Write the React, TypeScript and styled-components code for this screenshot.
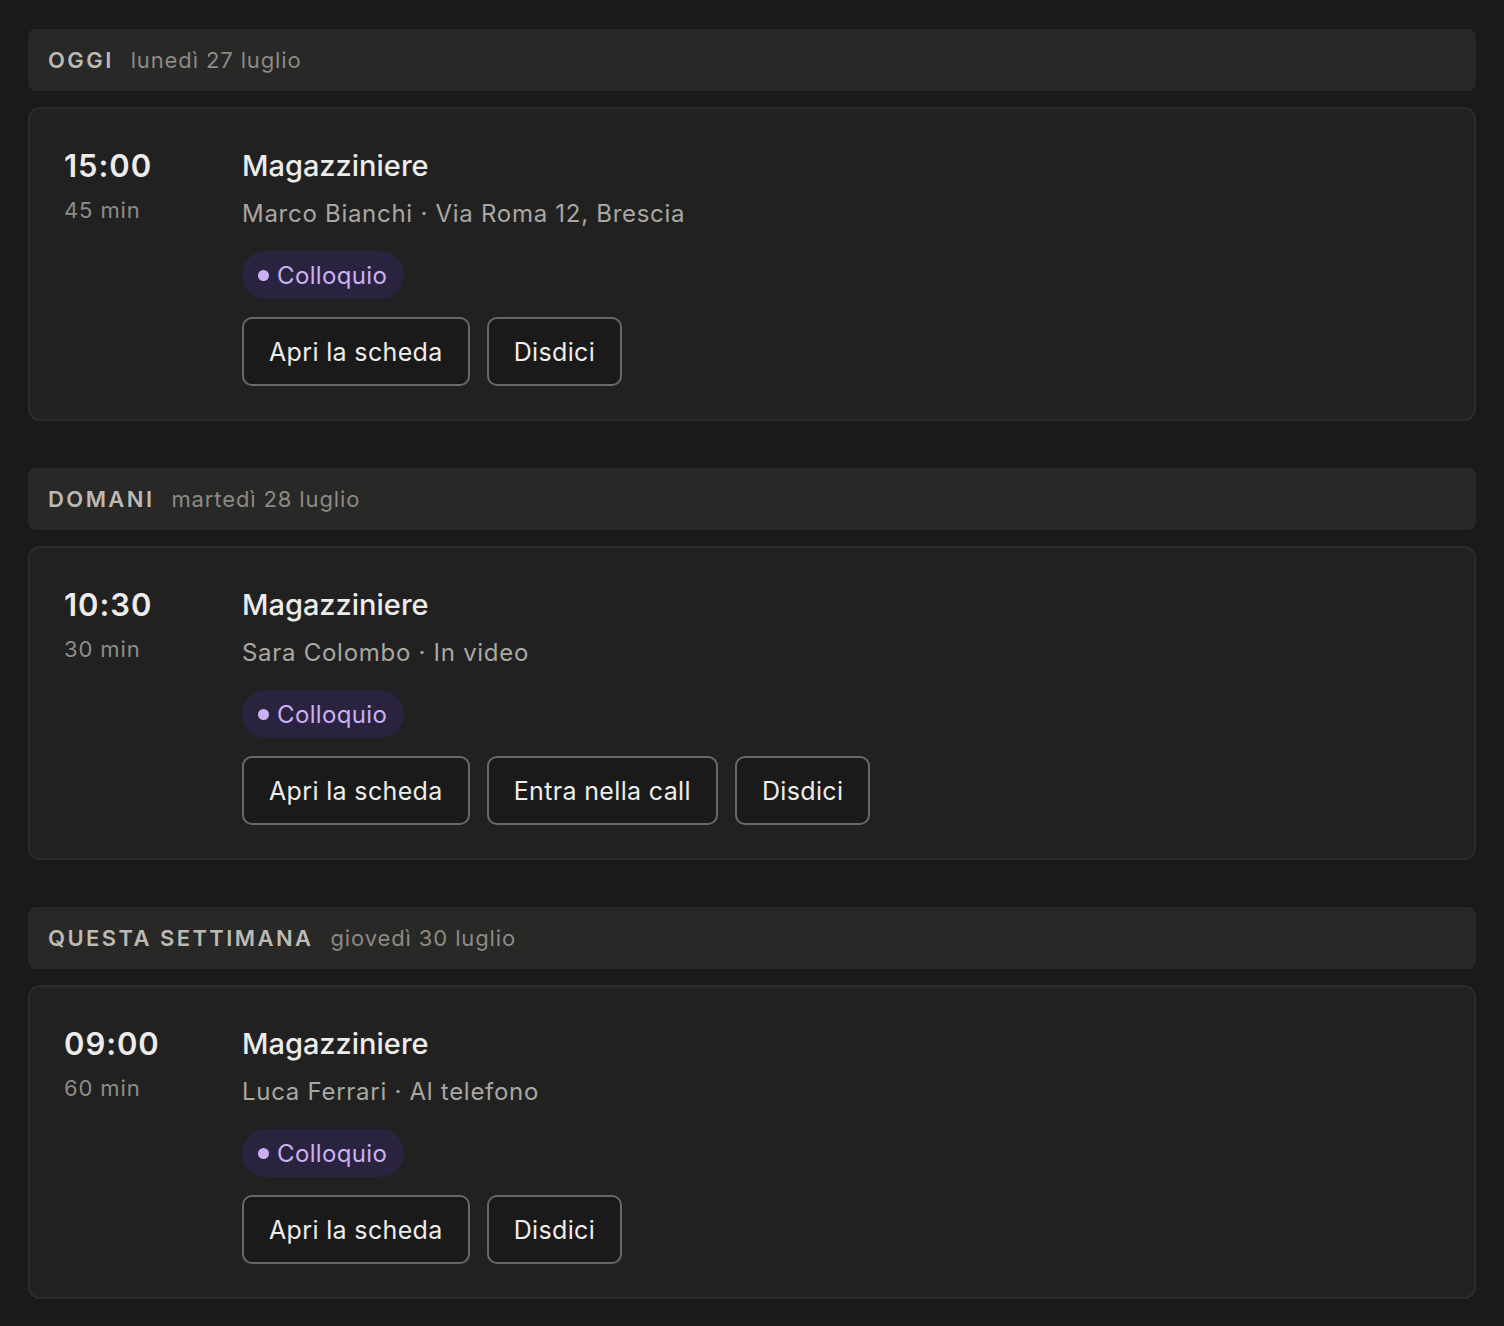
import React from "react";
import styled, { createGlobalStyle } from "styled-components";

type Appointment = {
  time: string;
  duration: string;
  role: string;
  candidate: string;
  place: string;
  kind: string;
  actions: string[];
};

type Day = {
  label: string;
  date: string;
  items: Appointment[];
};

const days: Day[] = [
  {
    label: "Oggi",
    date: "lunedì 27 luglio",
    items: [
      {
        time: "15:00",
        duration: "45 min",
        role: "Magazziniere",
        candidate: "Marco Bianchi",
        place: "Via Roma 12, Brescia",
        kind: "Colloquio",
        actions: ["Apri la scheda", "Disdici"],
      },
    ],
  },
  {
    label: "Domani",
    date: "martedì 28 luglio",
    items: [
      {
        time: "10:30",
        duration: "30 min",
        role: "Magazziniere",
        candidate: "Sara Colombo",
        place: "In video",
        kind: "Colloquio",
        actions: ["Apri la scheda", "Entra nella call", "Disdici"],
      },
    ],
  },
  {
    label: "Questa settimana",
    date: "giovedì 30 luglio",
    items: [
      {
        time: "09:00",
        duration: "60 min",
        role: "Magazziniere",
        candidate: "Luca Ferrari",
        place: "Al telefono",
        kind: "Colloquio",
        actions: ["Apri la scheda", "Disdici"],
      },
    ],
  },
];

const GlobalStyle = createGlobalStyle`
  html, body {
    margin: 0;
    padding: 0;
    background: #1a1a1a;
  }
  body {
    font-family: Inter, "Noto Sans", sans-serif;
    color: #ececea;
    -webkit-font-smoothing: antialiased;
  }
`;

const Page = styled.main`
  padding: 29px 28px 24px;
  display: flex;
  flex-direction: column;
  gap: 47px;
`;

const Section = styled.section`
  display: flex;
  flex-direction: column;
  gap: 16px;
`;

const DayHeader = styled.header`
  height: 62px;
  box-sizing: border-box;
  padding: 0 20px;
  display: flex;
  align-items: center;
  gap: 17px;
  background: #282827;
  border-radius: 8px;
`;

const DayLabel = styled.span`
  font-size: 22px;
  font-weight: 600;
  letter-spacing: 0.11em;
  text-transform: uppercase;
  color: #bdbab4;
`;

const DayDate = styled.span`
  font-size: 22px;
  letter-spacing: 0.04em;
  color: #8d8a85;
`;

const Card = styled.article`
  display: grid;
  grid-template-columns: 178px 1fr;
  padding: 39px 34px 33px 34px;
  background: #212121;
  border: 2px solid #2c2c2c;
  border-radius: 12px;
`;

const TimeCol = styled.div`
  display: flex;
  flex-direction: column;
  gap: 13px;
`;

const Time = styled.div`
  font-size: 31px;
  font-weight: 600;
  line-height: 36px;
  letter-spacing: 0.03em;
  color: #ececea;
`;

const Duration = styled.div`
  font-size: 22px;
  line-height: 26px;
  letter-spacing: 0.04em;
  color: #8f8c87;
`;

const Body = styled.div`
  display: flex;
  flex-direction: column;
  align-items: flex-start;
`;

const Role = styled.h3`
  margin: 0;
  font-size: 29px;
  font-weight: 500;
  line-height: 36px;
  color: #ececea;
`;

const Meta = styled.p`
  margin: 15px 0 0;
  font-size: 24px;
  line-height: 30px;
  letter-spacing: 0.03em;
  color: #aaa7a1;
`;

const Badge = styled.span`
  margin-top: 22px;
  height: 48px;
  box-sizing: border-box;
  padding: 0 17px 0 16px;
  display: inline-flex;
  align-items: center;
  gap: 8px;
  border-radius: 999px;
  background: #2a2340;
  color: #c9b1f2;
  font-size: 24px;
  letter-spacing: 0.015em;

  &::before {
    content: "";
    width: 11px;
    height: 11px;
    border-radius: 50%;
    background: #c9b1f2;
  }
`;

const Actions = styled.div`
  margin-top: 18px;
  display: flex;
  gap: 17px;
`;

const Button = styled.button`
  height: 69px;
  box-sizing: border-box;
  padding: 0 25px;
  border: 2px solid #6b6864;
  border-radius: 10px;
  background: #1a1a1a;
  color: #ededeb;
  font-family: inherit;
  font-size: 25px;
  letter-spacing: 0.014em;
  cursor: pointer;
`;

export default function App() {
  return (
    <>
      <GlobalStyle />
      <Page>
        {days.map((day) => (
          <Section key={day.label}>
            <DayHeader>
              <DayLabel>{day.label}</DayLabel>
              <DayDate>{day.date}</DayDate>
            </DayHeader>
            {day.items.map((a) => (
              <Card key={a.time}>
                <TimeCol>
                  <Time>{a.time}</Time>
                  <Duration>{a.duration}</Duration>
                </TimeCol>
                <Body>
                  <Role>{a.role}</Role>
                  <Meta>
                    {a.candidate} · {a.place}
                  </Meta>
                  <Badge>{a.kind}</Badge>
                  <Actions>
                    {a.actions.map((label) => (
                      <Button key={label}>{label}</Button>
                    ))}
                  </Actions>
                </Body>
              </Card>
            ))}
          </Section>
        ))}
      </Page>
    </>
  );
}
